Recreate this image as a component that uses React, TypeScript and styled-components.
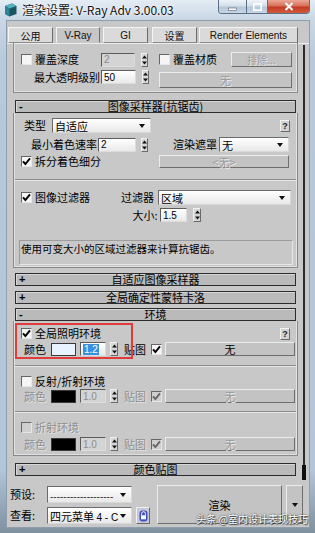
import React from "react";
import styled, { createGlobalStyle } from "styled-components";

const CJK = `"Noto Sans CJK SC", "Noto Sans", sans-serif`;
const LAT = `"Liberation Sans", Arial, "Noto Sans CJK SC", sans-serif`;

const Global = createGlobalStyle`
  html, body { margin: 0; padding: 0; background: #aec2d5; }
  body { width: 315px; height: 533px; overflow: hidden; }
  * { box-sizing: border-box; }
`;

const Win = styled.div`
  position: relative;
  width: 315px;
  height: 533px;
  display: flex;
  flex-direction: column;
  overflow: hidden;
  font-family: ${CJK};
  background: linear-gradient(180deg, #e4ecf4 0px, #cad8e6 18px, #b7c9da 60px, #b2c6d9 470px, #7f909f 533px);
`;

const TitleBar = styled.div`
  height: 21px;
  flex: none;
  display: flex;
  align-items: flex-start;
`;

const AppIcon = styled.svg`
  flex: none;
  margin: 3px 0 0 4px;
`;

const Title = styled.div`
  margin: 2px 0 0 5px;
  font-family: ${CJK};
  font-size: 12px;
  line-height: 16px;
  color: #111;
  text-shadow: 0 0 5px #fff, 0 0 2px #fff;
  white-space: nowrap;
`;

const WinBtns = styled.div`
  margin-left: auto;
  margin-right: 5px;
  display: flex;
  height: 14px;
  border: 1px solid #5b6f86;
  border-top: none;
  border-radius: 0 0 4px 4px;
  overflow: hidden;
`;

const WinBtn = styled.div<{ $w: number; $close?: boolean }>`
  flex: none;
  width: ${(p) => p.$w}px;
  height: 100%;
  display: flex;
  align-items: center;
  justify-content: center;
  background: ${(p) =>
    p.$close
      ? "linear-gradient(180deg,#eaa898 0%,#d8705a 45%,#c23c22 55%,#d4593c 100%)"
      : "linear-gradient(180deg,#eef3f8 0%,#d3dfea 45%,#b6c7d8 55%,#c8d6e4 100%)"};
  & + & {
    border-left: 1px solid #5b6f86;
  }
`;

const Client = styled.div`
  flex: 1;
  margin: 0 6px 0 7px;
  background: #c8c8c8;
  display: flex;
  flex-direction: column;
  box-shadow: 0 0 0 1px #8d9dac;
`;

const TabRow = styled.div`
  flex: none;
  display: flex;
  align-items: flex-end;
  height: 16px;
  margin-top: 6px;
  padding-left: 1px;
`;

const Tab = styled.div<{ $w: number; $ml?: number; $active?: boolean }>`
  flex: none;
  width: ${(p) => p.$w}px;
  margin-left: ${(p) => p.$ml ?? 0}px;
  height: 16px;
  display: flex;
  align-items: center;
  justify-content: center;
  background: ${(p) => (p.$active ? "#c6c6c6" : "#dadada")};
  border: 1px solid;
  border-color: #f4f4f4 #6c6c6c ${(p) => (p.$active ? "#c6c6c6" : "#8a8a8a")} #f4f4f4;
  font-family: ${LAT};
  font-size: 10px;
  color: #111;
  white-space: nowrap;
`;

const ScrollArea = styled.div`
  flex: none;
  height: 439px;
  display: flex;
  box-shadow: inset 0 1px #ededed;
`;

const Rollouts = styled.div`
  flex: none;
  width: 285px;
  margin-left: 6px;
  display: flex;
  flex-direction: column;
  overflow: hidden;
`;

const ScrollBar = styled.div`
  flex: none;
  width: 4px;
  margin-left: 4px;
  display: flex;
  flex-direction: column;
  align-items: center;
  padding-top: 2px;
`;

const Rail = styled.div`
  flex: 1;
  width: 2px;
  background: #2b2b2b;
`;

const Thumb = styled.div`
  flex: none;
  width: 4px;
  height: 15px;
  margin-bottom: 2px;
  background: #0e0e0e;
`;

const Panel = styled.div<{ $pt: number; $pb: number }>`
  position: relative;
  flex: none;
  border: 1px solid #8a8a8a;
  border-top: none;
  box-shadow: inset 1px 0 #e0e0e0, inset -1px 0 #e0e0e0, inset 0 -1px #e0e0e0;
  padding: ${(p) => p.$pt}px 0 ${(p) => p.$pb}px;
  display: flex;
  flex-direction: column;
`;

const Cols = styled.div`
  display: flex;
`;

const Col = styled.div<{ $w: number }>`
  flex: none;
  width: ${(p) => p.$w}px;
  display: flex;
  flex-direction: column;
`;

const Header = styled.div<{ $mt: number }>`
  flex: none;
  margin: ${(p) => p.$mt}px 2px 0;
  height: 13px;
  border: 1px solid #2c2c2c;
  background: #bababa;
  box-shadow: inset 1px 1px 0 #d6d6d6;
  display: grid;
  grid-template-columns: 12px 1fr 12px;
  align-items: center;
  font-size: 11px;
  line-height: 11px;
  color: #000;
`;

const Sign = styled.span`
  font-family: ${LAT};
  font-size: 11px;
  font-weight: bold;
  padding-left: 3px;
`;

const HeaderText = styled.span`
  text-align: center;
  white-space: nowrap;
`;

const Row = styled.div<{ $h: number; $mt?: number }>`
  flex: none;
  display: flex;
  align-items: center;
  height: ${(p) => p.$h}px;
  margin-top: ${(p) => p.$mt ?? 0}px;
`;

const Label = styled.span<{ $w?: number; $ml?: number; $right?: boolean; $dim?: boolean }>`
  flex: none;
  width: ${(p) => (p.$w ? `${p.$w}px` : "auto")};
  margin-left: ${(p) => p.$ml ?? 0}px;
  text-align: ${(p) => (p.$right ? "right" : "left")};
  font-size: 11px;
  line-height: 13px;
  white-space: nowrap;
  color: ${(p) => (p.$dim ? "#8f8f8f" : "#000")};
  text-shadow: ${(p) => (p.$dim ? "1px 1px 0 #e4e4e4" : "none")};
`;

const CheckBox = styled.span<{ $ml?: number; $dim?: boolean }>`
  flex: none;
  width: 11px;
  height: 11px;
  margin-left: ${(p) => p.$ml ?? 0}px;
  background: ${(p) => (p.$dim ? "#cfcfcf" : "#f5f5f5")};
  border: 1px solid;
  border-color: #666 #e6e6e6 #e6e6e6 #666;
  display: flex;
  align-items: center;
  justify-content: center;
`;

const Field = styled.div<{ $w: number; $ml?: number; $dim?: boolean; $h?: number }>`
  flex: none;
  width: ${(p) => p.$w}px;
  height: ${(p) => p.$h ?? 14}px;
  margin-left: ${(p) => p.$ml ?? 0}px;
  background: ${(p) => (p.$dim ? "#d4d4d4" : "linear-gradient(180deg,#ffffff,#e9e9e9)")};
  border: 1px solid;
  border-color: #5c5c5c #dcdcdc #dcdcdc #5c5c5c;
  padding-left: 2px;
  display: flex;
  align-items: center;
  font-family: ${LAT};
  font-size: 10px;
  color: ${(p) => (p.$dim ? "#8c8c8c" : "#000")};
  white-space: nowrap;
  overflow: hidden;
`;

const Selected = styled.span`
  background: #3b8fe3;
  color: #fff;
  padding: 0 1px;
  line-height: 11px;
`;

const SpinBox = styled.div<{ $w: number; $ml: number }>`
  flex: none;
  width: ${(p) => p.$w}px;
  height: 14px;
  margin-left: ${(p) => p.$ml}px;
  background: #d6d6d6;
  border: 1px solid;
  border-color: #f0f0f0 #6a6a6a #6a6a6a #f0f0f0;
  display: flex;
  align-items: center;
  justify-content: center;
`;

const Drop = styled.div<{ $w: number; $h?: number }>`
  flex: none;
  width: ${(p) => p.$w}px;
  height: ${(p) => p.$h ?? 15}px;
  background: linear-gradient(180deg, #ffffff, #e8e8e8);
  border: 1px solid;
  border-color: #6a6a6a #d8d8d8 #d8d8d8 #6a6a6a;
  display: flex;
  align-items: center;
  padding: 0 5px 0 2px;
  font-size: 11px;
  color: #000;
  white-space: nowrap;
`;

const DropText = styled.span`
  flex: 1;
  overflow: hidden;
`;

const Latin = styled.span`
  font-family: ${LAT};
  font-size: 10px;
`;

const Dashes = styled.span`
  font-family: ${LAT};
  font-size: 10px;
  color: #333;
`;

const Btn = styled.div<{ $w: number; $h: number; $ml?: number; $mt?: number; $dim?: boolean }>`
  flex: none;
  width: ${(p) => p.$w}px;
  height: ${(p) => p.$h}px;
  margin-left: ${(p) => p.$ml ?? 0}px;
  margin-top: ${(p) => p.$mt ?? 0}px;
  background: #c3c3c3;
  border: 1px solid;
  border-color: #ececec #6e6e6e #6e6e6e #ececec;
  display: flex;
  align-items: center;
  justify-content: center;
  font-size: 11px;
  color: ${(p) => (p.$dim ? "#9a9a9a" : "#000")};
  text-shadow: ${(p) => (p.$dim ? "1px 1px 0 #ececec" : "none")};
  white-space: nowrap;
`;

const Help = styled.div<{ $ml?: string }>`
  flex: none;
  width: 10px;
  height: 12px;
  margin-left: ${(p) => p.$ml ?? "auto"};
  margin-right: 7px;
  background: #d2d2d2;
  border: 1px solid;
  border-color: #f2f2f2 #6a6a6a #6a6a6a #f2f2f2;
  display: flex;
  align-items: center;
  justify-content: center;
  font-family: ${LAT};
  font-size: 9px;
  font-weight: bold;
  color: #222;
`;

const Swatch = styled.div<{ $c: string }>`
  flex: none;
  width: 25px;
  height: 13px;
  background: ${(p) => p.$c};
  border: 1px solid #3a3a3a;
`;

const Sep = styled.div<{ $mt: number }>`
  flex: none;
  height: 2px;
  margin: ${(p) => p.$mt}px 1px 0;
  border-top: 1px solid #8c8c8c;
  border-bottom: 1px solid #e6e6e6;
`;

const Desc = styled.div`
  flex: none;
  margin: 18px 0 0 5px;
  width: 274px;
  height: 25px;
  border: 1px solid;
  border-color: #9c9c9c #e6e6e6 #e6e6e6 #9c9c9c;
  padding: 1px 0 0 1px;
  font-size: 10.5px;
  line-height: 13px;
  color: #000;
  white-space: nowrap;
`;

const Highlight = styled.div`
  position: absolute;
  left: 1px;
  top: 2px;
  width: 118px;
  height: 36px;
  border: 2px solid #e23b3b;
  pointer-events: none;
`;

const BottomBar = styled.div`
  flex: none;
  height: 45px;
  display: flex;
  align-items: flex-start;
  padding-left: 3px;
`;

const BottomGrid = styled.div`
  flex: none;
  margin-top: 4px;
  display: grid;
  grid-template-columns: 37px 85px 18px;
  grid-template-rows: 17px 17px;
  row-gap: 4px;
  align-items: center;
`;

const BottomLabel = styled.span`
  font-size: 11px;
  line-height: 13px;
  color: #000;
`;

const LockBtn = styled.div`
  margin-left: 4px;
  width: 14px;
  height: 17px;
  background: #c9c9d6;
  border: 1px solid;
  border-color: #efefef #6a6a6a #6a6a6a #efefef;
  display: flex;
  align-items: center;
  justify-content: center;
`;

const Watermark = styled.div`
  position: absolute;
  right: 7px;
  bottom: 8px;
  font-size: 10px;
  line-height: 12px;
  color: #fff;
  text-shadow: 0 0 2px rgba(0, 0, 0, 0.8), 1px 1px 1px rgba(0, 0, 0, 0.6);
  white-space: nowrap;
`;

const BottomFrame = styled.div`
  flex: none;
  height: 6px;
`;

const Tick = ({ dim }: { dim?: boolean }) => (
  <svg width="9" height="9" viewBox="0 0 9 9">
    <path d="M1 4.3 L3.4 7 L8 1.4" stroke={dim ? "#666" : "#000"} strokeWidth="1.9" fill="none" />
  </svg>
);

const Check = ({ ml, checked, dim }: { ml?: number; checked?: boolean; dim?: boolean }) => (
  <CheckBox $ml={ml} $dim={dim}>{checked && <Tick dim={dim} />}</CheckBox>
);

const Spinner = ({ w = 7, ml }: { w?: number; ml: number }) => (
  <SpinBox $w={w} $ml={ml}>
    <svg width="5" height="10" viewBox="0 0 5 10">
      <path d="M2.5 0.5 L5 3.5 L0 3.5 Z" fill="#111" />
      <path d="M0 6.5 L5 6.5 L2.5 9.5 Z" fill="#111" />
    </svg>
  </SpinBox>
);

const Arrow = () => (
  <svg width="6" height="4" viewBox="0 0 6 4">
    <path d="M0 0 L6 0 L3 4 Z" fill="#111" />
  </svg>
);

const Dropdown = ({ w, h, children }: { w: number; h?: number; children: React.ReactNode }) => (
  <Drop $w={w} $h={h}>
    <DropText>{children}</DropText>
    <Arrow />
  </Drop>
);

const ColorRow = ({ mt, color, dim, value }: { mt: number; color: string; dim?: boolean; value: React.ReactNode }) => (
  <Row $h={14} $mt={mt}>
    <Label $ml={10} $w={27} $dim={dim}>颜色</Label>
    <Swatch $c={color} />
    <Field $w={26} $ml={4} $dim={dim}>{value}</Field>
    <Spinner w={8} ml={4} />
    <Label $ml={6} $w={27} $dim={dim}>贴图</Label>
    <Check checked dim={dim} />
    <Btn $w={130} $h={14} $ml={3} $dim={dim}>无</Btn>
  </Row>
);

export default function App() {
  return (
    <>
      <Global />
      <Win>
        <TitleBar>
          <AppIcon width="13" height="14" viewBox="0 0 13 14">
            <path d="M1 3 L8 0.5 L12.5 3 L12.5 11 L5.5 13.5 L1 11 Z" fill="#1a5561" />
            <path d="M1 3 L8 0.5 L12.5 3 L5.5 5.5 Z" fill="#4fb3c2" />
            <path d="M1 3 L5.5 5.5 L5.5 13.5 L1 11 Z" fill="#2c8495" />
          </AppIcon>
          <Title>渲染设置: V-Ray Adv 3.00.03</Title>
          <WinBtns>
            <WinBtn $w={27}>
              <svg width="9" height="8" viewBox="0 0 9 8">
                <rect x="0.5" y="5" width="8" height="2.5" fill="#fff" stroke="#4d5f73" strokeWidth="0.6" />
              </svg>
            </WinBtn>
            <WinBtn $w={21}>
              <svg width="9" height="8" viewBox="0 0 9 8">
                <rect x="0.8" y="0.8" width="7.4" height="6.4" fill="none" stroke="#fff" strokeWidth="1.6" />
              </svg>
            </WinBtn>
            <WinBtn $w={42} $close>
              <svg width="10" height="9" viewBox="0 0 10 9">
                <path d="M1.5 1 L8.5 8 M8.5 1 L1.5 8" stroke="#fff" strokeWidth="2" />
              </svg>
            </WinBtn>
          </WinBtns>
        </TitleBar>

        <Client>
          <TabRow>
            <Tab $w={45}>公用</Tab>
            <Tab $w={44} $ml={3} $active>V-Ray</Tab>
            <Tab $w={45} $ml={3}>GI</Tab>
            <Tab $w={45} $ml={4}>设置</Tab>
            <Tab $w={99} $ml={2}>Render Elements</Tab>
          </TabRow>

          <ScrollArea>
            <Rollouts>
              <Panel $pt={9} $pb={4}>
                <Cols>
                  <Col $w={141}>
                    <Row $h={15}>
                      <Check ml={7} />
                      <Label $ml={3} $w={66}>覆盖深度</Label>
                      <Field $w={34} $dim>2</Field>
                      <Spinner ml={6} />
                    </Row>
                    <Row $h={14} $mt={3}>
                      <Label $ml={20} $w={66} $right>最大透明级别</Label>
                      <Field $w={35} $ml={1}>50</Field>
                      <Spinner ml={6} />
                    </Row>
                  </Col>
                  <Col $w={143}>
                    <Row $h={15}>
                      <Check ml={4} />
                      <Label $ml={3} $w={58}>覆盖材质</Label>
                      <Btn $w={61} $h={15} $dim>
                        <Latin>排除...</Latin>
                      </Btn>
                    </Row>
                    <Btn $w={133} $h={16} $ml={4} $mt={5} $dim>无</Btn>
                  </Col>
                </Cols>
              </Panel>

              <Header $mt={7}>
                <Sign>-</Sign>
                <HeaderText>图像采样器(抗锯齿)</HeaderText>
              </Header>
              <Panel $pt={5} $pb={2}>
                <Row $h={15}>
                  <Label $ml={10} $w={28}>类型</Label>
                  <Dropdown w={99}>自适应</Dropdown>
                  <Help $ml="129px">?</Help>
                </Row>
                <Row $h={15} $mt={4}>
                  <Label $ml={17} $w={67}>最小着色速率</Label>
                  <Field $w={38}>2</Field>
                  <Spinner ml={5} />
                  <Label $ml={25} $w={46}>渲染遮罩</Label>
                  <Dropdown w={70}>无</Dropdown>
                </Row>
                <Row $h={13} $mt={3}>
                  <Check ml={7} checked />
                  <Label $ml={3} $w={124}>拆分着色细分</Label>
                  <Btn $w={130} $h={13} $dim>&lt;无&gt;</Btn>
                </Row>
                <Sep $mt={11} />
                <Row $h={15} $mt={9}>
                  <Check ml={7} checked />
                  <Label $ml={3} $w={86}>图像过滤器</Label>
                  <Label $w={37}>过滤器</Label>
                  <Dropdown w={133}>区域</Dropdown>
                </Row>
                <Row $h={14} $mt={3}>
                  <Label $ml={115} $w={31} $right>大小:&nbsp;</Label>
                  <Field $w={27}>1.5</Field>
                  <Spinner w={8} ml={6} />
                </Row>
                <Desc>使用可变大小的区域过滤器来计算抗锯齿。</Desc>
              </Panel>

              <Header $mt={5}>
                <Sign>+</Sign>
                <HeaderText>自适应图像采样器</HeaderText>
              </Header>
              <Header $mt={5}>
                <Sign>+</Sign>
                <HeaderText>全局确定性蒙特卡洛</HeaderText>
              </Header>
              <Header $mt={4}>
                <Sign>-</Sign>
                <HeaderText>环境</HeaderText>
              </Header>
              <Panel $pt={7} $pb={4}>
                <Row $h={11}>
                  <Check ml={7} checked />
                  <Label $ml={3}>全局照明环境</Label>
                  <Help>?</Help>
                </Row>
                <ColorRow mt={3} color="#e9f2ff" value={<Selected>1.2</Selected>} />
                <Sep $mt={9} />
                <Row $h={11} $mt={9}>
                  <Check ml={7} />
                  <Label $ml={3}>反射/折射环境</Label>
                </Row>
                <ColorRow mt={2} color="#000" dim value="1.0" />
                <Sep $mt={8} />
                <Row $h={11} $mt={9}>
                  <Check ml={7} dim />
                  <Label $ml={3} $dim>折射环境</Label>
                </Row>
                <ColorRow mt={4} color="#000" dim value="1.0" />
                <Highlight />
              </Panel>

              <Header $mt={7}>
                <Sign>+</Sign>
                <HeaderText>颜色贴图</HeaderText>
              </Header>
            </Rollouts>
            <ScrollBar>
              <Rail />
              <Thumb />
            </ScrollBar>
          </ScrollArea>

          <BottomBar>
            <BottomGrid>
              <BottomLabel>预设:</BottomLabel>
              <Dropdown w={85} h={17}>
                <Dashes>-------------------</Dashes>
              </Dropdown>
              <span />
              <BottomLabel>查看:</BottomLabel>
              <Dropdown w={85} h={17}>
                四元菜单 <Latin>4 - C</Latin>
              </Dropdown>
              <LockBtn>
                <svg width="9" height="12" viewBox="0 0 9 12">
                  <rect x="0.5" y="0.5" width="8" height="11" rx="3" fill="#3f4fc0" />
                  <path d="M2.6 5 V3.6 a1.9 1.9 0 0 1 3.8 0 V5" stroke="#fff" strokeWidth="1" fill="none" />
                  <rect x="2" y="5.3" width="5" height="4" fill="#fff" />
                </svg>
              </LockBtn>
            </BottomGrid>
            <Btn $w={125} $h={39} $ml={7} $mt={3}>渲染</Btn>
            <Btn $w={17} $h={39} $ml={4} $mt={3}>
              <Arrow />
            </Btn>
          </BottomBar>
        </Client>
        <BottomFrame />
        <Watermark>头条 @室内设计表现技巧</Watermark>
      </Win>
    </>
  );
}
